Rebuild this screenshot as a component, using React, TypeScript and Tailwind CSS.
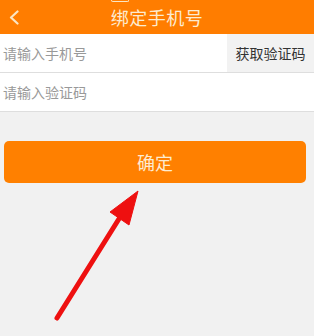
import React from "react";

export default function App() {
  return (
    <div
      className="relative w-[314px] h-[336px] overflow-hidden bg-[#f1f1f1]"
      style={{ fontFamily: '"Noto Sans CJK SC", "Noto Sans", sans-serif' }}
    >
      <div className="relative h-[34px] bg-[#ff7d00] flex items-center justify-center">
        <svg className="absolute left-[8px] top-[10px]" width="12" height="15" viewBox="0 0 12 15">
          <path d="M9.5 1.5 L3 7.5 L9.5 13.5" fill="none" stroke="#fbe6c4" strokeWidth="2.2" strokeLinecap="round" strokeLinejoin="round" />
        </svg>
        <div className="absolute left-[111px] top-[-2px] w-[18px] h-[4px] border-b-[1.5px] border-x-[1.5px] border-[#fbe6c4] rounded-b-[2px]" />
        <span className="text-[18px] leading-none text-[#fdebd0] tracking-[0.5px]">绑定手机号</span>
      </div>
      <div className="bg-white">
        <div className="flex h-[39px] border-b border-[#dedede]">
          <div className="flex-1 flex items-center pl-[3px] text-[14px] text-[#999]">请输入手机号</div>
          <div className="w-[87px] flex items-center justify-center bg-[#f2f2f2] text-[14px] text-[#333]">获取验证码</div>
        </div>
        <div className="flex h-[39px] items-center pl-[3px] border-b border-[#dedede] text-[14px] text-[#999]">
          请输入验证码
        </div>
      </div>
      <div className="px-[4px] pr-[8px] pt-[29px]">
        <div className="h-[42px] rounded-[5px] bg-[#ff8000] flex items-center justify-center text-[18px] text-[#fdebd0]">
          确定
        </div>
      </div>
      <svg className="absolute left-0 top-0" width="314" height="336" viewBox="0 0 314 336">
        <line x1="57" y1="318" x2="122" y2="214" stroke="#ee1010" strokeWidth="5" strokeLinecap="round" />
        <polygon points="138,191 110,212 129,225" fill="#ee1010" stroke="#ee1010" strokeWidth="1" strokeLinejoin="round" />
      </svg>
    </div>
  );
}
